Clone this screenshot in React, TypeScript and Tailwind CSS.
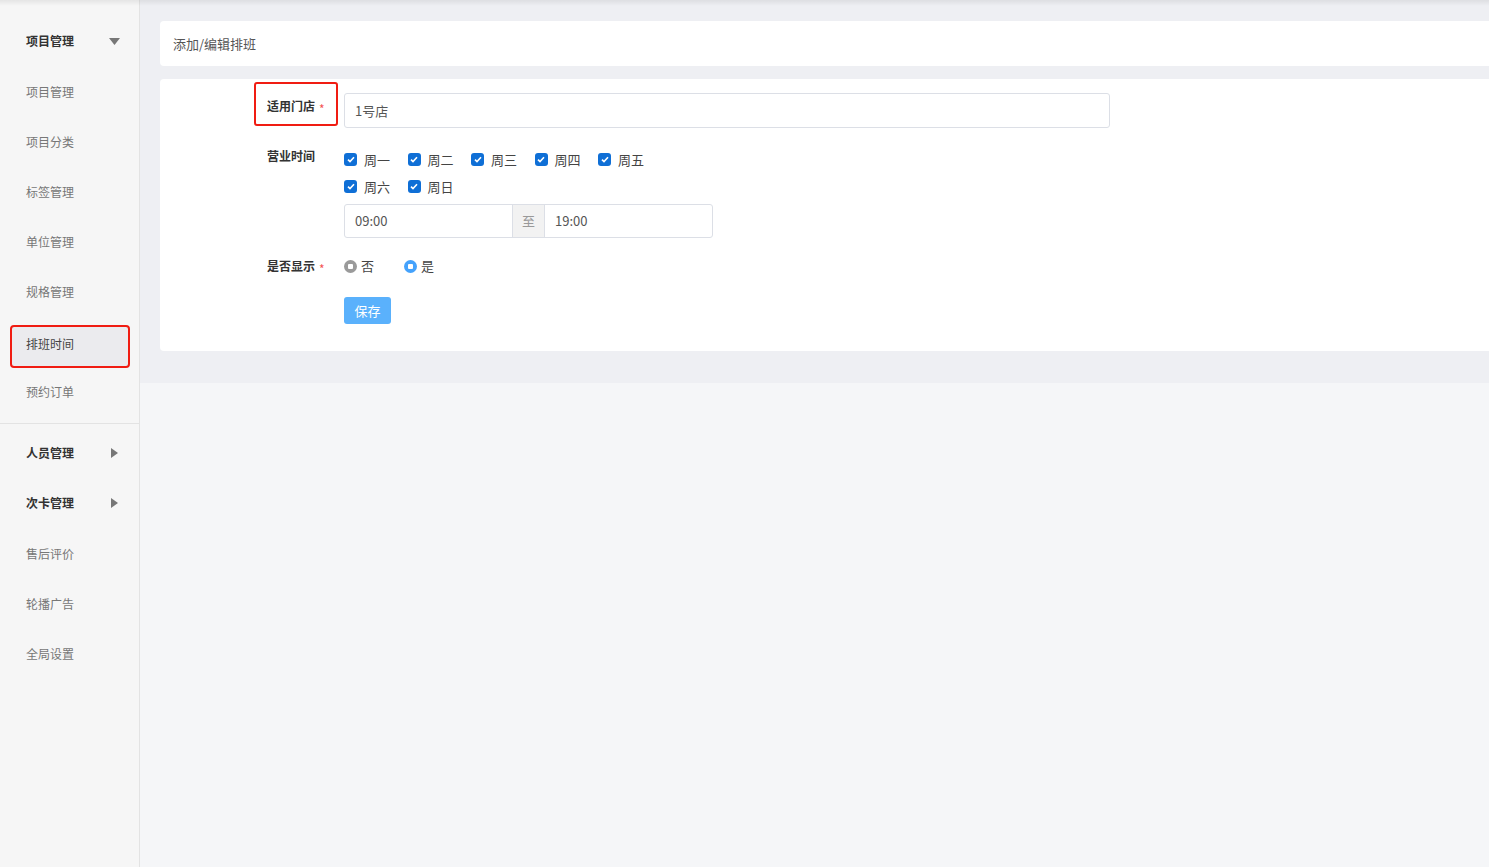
import { useState } from "react";

// ─── Data ─────────────────────────────────────────────────────────────────────

const SUB_ITEMS = [
  "项目管理",
  "项目分类",
  "标签管理",
  "单位管理",
  "规格管理",
  "排班时间",
  "预约订单",
];

const DAYS = ["周一", "周二", "周三", "周四", "周五", "周六", "周日"];

const FONT = "font-['Noto_Sans_CJK_SC','Noto_Sans',sans-serif]";

// ─── Small pieces ─────────────────────────────────────────────────────────────

function Caret({ dir }: { dir: "down" | "right" }) {
  return dir === "down" ? (
    <svg width="11" height="7" viewBox="0 0 11 7">
      <path d="M0 0h11L5.5 7z" fill="#777" />
    </svg>
  ) : (
    <svg width="7" height="10" viewBox="0 0 7 10">
      <path d="M0 0l7 5-7 5z" fill="#777" />
    </svg>
  );
}

function Required() {
  return <span className="ml-[4px] text-[12px] text-[#f45454] translate-y-[3px]">*</span>;
}

function Checkbox({ label }: { label: string }) {
  return (
    <label className="flex items-center w-[63.5px] h-[27px]">
      <span className="w-[13px] h-[13px] rounded-[3px] bg-[#0f6fd6] flex items-center justify-center">
        <svg width="8" height="7" viewBox="0 0 8 7">
          <path d="M1 3.6l2 2L7 1.3" stroke="#fff" strokeWidth="1.6" fill="none" />
        </svg>
      </span>
      <span className="ml-[7px] text-[13px] text-[#444]">{label}</span>
    </label>
  );
}

function Radio({ label, checked }: { label: string; checked: boolean }) {
  return (
    <label className="flex items-center">
      <span
        className={
          checked
            ? "w-[13px] h-[13px] rounded-full bg-[#44a2fc] flex items-center justify-center"
            : "w-[13px] h-[13px] rounded-full bg-[#9a9a9a] flex items-center justify-center"
        }
      >
        <span className="w-[5px] h-[5px] rounded-[1px] bg-white" />
      </span>
      <span className="ml-[4px] text-[13px] text-[#444]">{label}</span>
    </label>
  );
}

// ─── Sidebar ──────────────────────────────────────────────────────────────────

function Sidebar() {
  return (
    <aside className="w-[140px] shrink-0 bg-[#f6f6f6] border-r border-[#e3e3e3] min-h-[867px]">
      <div className="pt-[16px] pb-[7px] border-b border-[#e3e3e3]">
        <div className="h-[50px] flex items-center justify-between pl-[26px] pr-[19px]">
          <span className="text-[12px] font-bold text-[#333]">项目管理</span>
          <Caret dir="down" />
        </div>
        {SUB_ITEMS.map((item) =>
          item === "排班时间" ? (
            <div key={item} className="h-[50px] pt-[9px]">
              <div className="mx-[10px] w-[120px] h-[43px] flex items-center pl-[14px] pb-[5px] bg-[#ebebee] border-2 border-[#f01c12] rounded-[4px] text-[12px] text-[#444]">
                {item}
              </div>
            </div>
          ) : (
            <div key={item} className="h-[50px] pt-[1px] flex items-center pl-[26px] text-[12px] text-[#777]">
              {item}
            </div>
          )
        )}
      </div>
      <div className="pt-[4px]">
        {["人员管理", "次卡管理"].map((item) => (
          <div key={item} className="h-[50px] flex items-center justify-between pl-[26px] pr-[21px]">
            <span className="text-[12px] font-bold text-[#333]">{item}</span>
            <Caret dir="right" />
          </div>
        ))}
        {["售后评价", "轮播广告", "全局设置"].map((item) => (
          <div key={item} className="h-[50px] pt-[1px] flex items-center pl-[26px] text-[12px] text-[#777]">
            {item}
          </div>
        ))}
      </div>
    </aside>
  );
}

// ─── Form ─────────────────────────────────────────────────────────────────────

function ScheduleForm() {
  const [show] = useState(true);
  return (
    <div className="bg-white rounded-l-[4px] pt-[14px] pb-[27px] pl-[94px]">
      {/* 适用门店 */}
      <div className="flex items-center">
        <div className="w-[84px] h-[44px] mt-[-13px] border-2 border-[#f01c12] rounded-[3px] flex items-center pl-[11px] pt-[4px]">
          <span className="text-[12px] font-bold text-[#333]">适用门店</span>
          <Required />
        </div>
        <div className="ml-[6px] w-[766px] h-[35px] border border-[#dcdfe6] rounded-[3px] flex items-center px-[10px] text-[13px] text-[#555]">
          1号店
        </div>
      </div>

      {/* 营业时间 */}
      <div className="flex mt-[18px]">
        <div className="w-[90px] pl-[13px] h-[20px] flex items-center text-[12px] font-bold text-[#333]">
          营业时间
        </div>
        <div>
          <div className="w-[330px] flex flex-wrap">
            {DAYS.map((d) => (
              <Checkbox key={d} label={d} />
            ))}
          </div>
          <div className="mt-[4px] w-[369px] h-[34px] border border-[#dcdfe6] rounded-[3px] flex text-[13px] text-[#555]">
            <div className="w-[167px] flex items-center px-[10px]">09:00</div>
            <div className="w-[33px] flex items-center justify-center bg-[#f2f2f2] border-x border-[#dcdfe6] text-[#999]">
              至
            </div>
            <div className="flex-1 flex items-center px-[10px]">19:00</div>
          </div>
        </div>
      </div>

      {/* 是否显示 */}
      <div className="flex items-center mt-[18px] h-[20px]">
        <div className="w-[90px] pl-[13px] flex items-center">
          <span className="text-[12px] font-bold text-[#333]">是否显示</span>
          <Required />
        </div>
        <div className="flex items-center gap-[30px]">
          <Radio label="否" checked={!show} />
          <Radio label="是" checked={show} />
        </div>
      </div>

      {/* 保存 */}
      <div className="mt-[21px] pl-[90px]">
        <button className="w-[47px] h-[27px] rounded-[3px] bg-[#5ab1fc] text-white text-[13px]">
          保存
        </button>
      </div>
    </div>
  );
}

// ─── App ──────────────────────────────────────────────────────────────────────

export default function App() {
  return (
    <div className={`relative flex w-[1489px] min-h-[867px] bg-[#f5f6f8] ${FONT}`}>
      <div className="absolute top-0 left-0 right-0 h-[6px] pointer-events-none bg-gradient-to-b from-[rgba(0,0,0,0.07)] to-transparent" />
      <Sidebar />
      <main className="flex-1">
        <div className="bg-[#eeeff3] pt-[21px] pl-[20px] pb-[32px]">
          <div className="h-[45px] bg-white rounded-l-[4px] flex items-center pl-[13px] text-[13px] text-[#555]">
            添加/编辑排班
          </div>
          <div className="mt-[13px]">
            <ScheduleForm />
          </div>
        </div>
      </main>
    </div>
  );
}
